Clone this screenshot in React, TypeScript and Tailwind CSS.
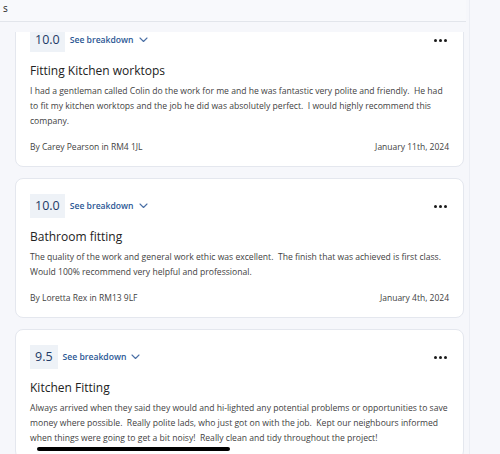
import React from 'react';

type Review = {
    score: string;
    title: string;
    lines: string[];
    author?: string;
    date?: string;
};

const reviews: Review[] = [
    {
        score: '10.0',
        title: 'Fitting Kitchen worktops',
        lines: [
            'I had a gentleman called Colin do the work for me and he was fantastic very polite and friendly.  He had',
            'to fit my kitchen worktops and the job he did was absolutely perfect.  I would highly recommend this',
            'company.',
        ],
        author: 'By Carey Pearson in RM4 1JL',
        date: 'January 11th, 2024',
    },
    {
        score: '10.0',
        title: 'Bathroom fitting',
        lines: [
            'The quality of the work and general work ethic was excellent.  The finish that was achieved is first class.',
            'Would 100% recommend very helpful and professional.',
        ],
        author: 'By Loretta Rex in RM13 9LF',
        date: 'January 4th, 2024',
    },
    {
        score: '9.5',
        title: 'Kitchen Fitting',
        lines: [
            'Always arrived when they said they would and hi-lighted any potential problems or opportunities to save',
            'money where possible.  Really polite lads, who just got on with the job.  Kept our neighbours informed',
            'when things were going to get a bit noisy!  Really clean and tidy throughout the project!',
        ],
    },
];

const Chevron = () => (
    <svg width="9" height="6" viewBox="0 0 9 6" fill="none" className="ml-[5px] mt-[1px]">
        <path d="M1 1l3.5 3.5L8 1" stroke="#4a6fa5" strokeWidth="1.1" strokeLinecap="round" strokeLinejoin="round" />
    </svg>
);

const ReviewCard: React.FC<{ review: Review; first?: boolean }> = ({ review, first }) => {
    return (
        <div
            className={`bg-white border border-[#e4e7ee] rounded-[8px] px-[14px] pt-[15px] pb-[12px] ${first ? '-mt-[20px]' : ''}`}
        >
            {/* score row */}
            <div className="flex items-center justify-between h-[24px]">
                <div className="flex items-center">
                    <div className="h-[24px] px-[5px] flex items-center bg-[#eef2f7] text-[#1d3a66] text-[12.5px] leading-none">
                        {review.score}
                    </div>
                    <button className="ml-[5px] flex items-center text-[#2b5794] text-[8.6px] font-semibold">
                        See breakdown
                        <Chevron />
                    </button>
                </div>
                <div className="flex gap-[2px] pr-[2px]">
                    <span className="w-[3px] h-[3px] rounded-full bg-[#1a1a1a]" />
                    <span className="w-[3px] h-[3px] rounded-full bg-[#1a1a1a]" />
                    <span className="w-[3px] h-[3px] rounded-full bg-[#1a1a1a]" />
                </div>
            </div>

            <h3 className="mt-[8px] text-[12px] leading-[22px] font-medium text-[#222]">{review.title}</h3>

            <p className="mt-[2px] text-[8.6px] leading-[15px] text-[#424242] whitespace-pre">
                {review.lines.map((l, i) => (
                    <span key={i} className="block">{l}</span>
                ))}
            </p>

            {review.author && (
                <div className="mt-[10px] flex justify-between text-[8.5px] leading-[15px] text-[#424242]">
                    <span>{review.author}</span>
                    <span>{review.date}</span>
                </div>
            )}
        </div>
    );
};

export default function App() {
    return (
        <div
            className="relative w-[500px] h-[454px] overflow-hidden bg-[#f6f7fb]"
            style={{ fontFamily: '"Open Sans", "Liberation Sans", sans-serif' }}
        >
            <div className="w-[470px] h-full flex flex-col border-r border-[#eceef4]">
                {/* header */}
                <div className="h-[22px] w-[466px] border-b border-[#e2e5eb] bg-[#f8f9fc] px-[3px] pt-[1px] text-[10px] text-[#222]">
                    s
                </div>

                {/* list */}
                <div className="mt-[10px] flex-1 overflow-hidden pl-[15px] pr-[5px]">
                    <div className="flex flex-col gap-[11px]">
                        {reviews.map((r, i) => (
                            <ReviewCard key={i} review={r} first={i === 0} />
                        ))}
                    </div>
                </div>
            </div>

            {/* home indicator */}
            <div className="absolute left-[37px] top-[447px] w-[193px] h-[4px] rounded-full bg-black" />
        </div>
    );
}
